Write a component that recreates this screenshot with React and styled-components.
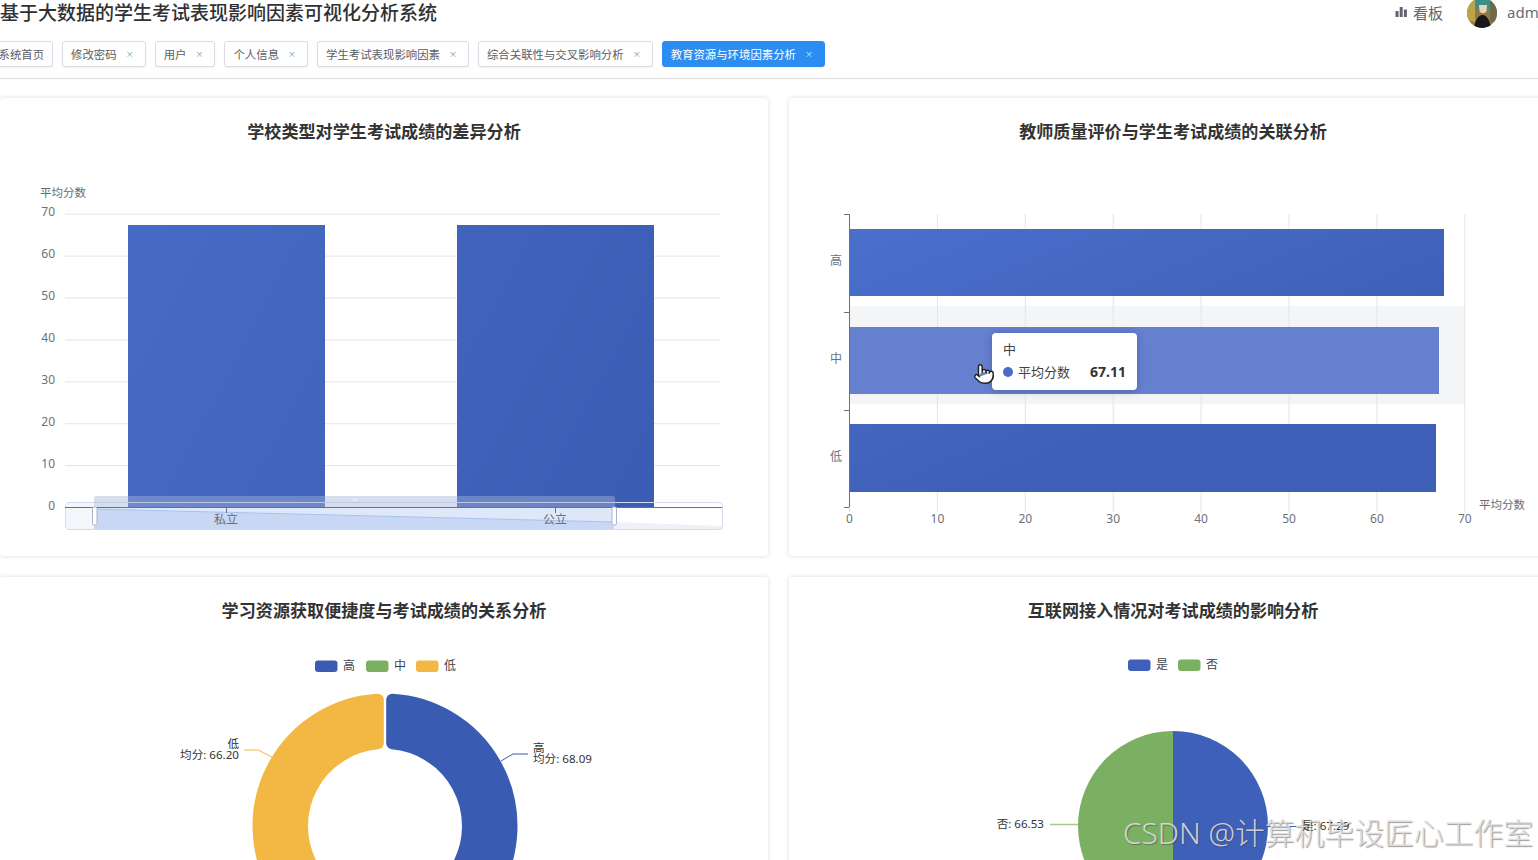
import React from 'react';
import styled, { createGlobalStyle } from 'styled-components';
import { Pointer } from 'lucide-react';

const GlobalStyle = createGlobalStyle`
  html, body {
    margin: 0;
    padding: 0;
    background: #fff;
  }
  body {
    font-family: "Noto Sans", "Noto Sans CJK SC", sans-serif;
  }
`;

const Page = styled.div`
  width: 1538px;
  height: 860px;
  overflow: hidden;
  position: relative;
  background: #fff;
`;

const Header = styled.header`
  height: 26px;
  padding-bottom: 4px;
  display: flex;
  align-items: center;
  white-space: nowrap;
`;

const Title = styled.h1`
  margin: 0 0 3px;
  flex: 1;
  font-size: 19px;
  line-height: 24px;
  font-weight: 500;
  color: #303133;
  font-family: "Noto Sans CJK SC", sans-serif;
`;

const BoardLink = styled.div`
  display: flex;
  align-items: center;
  gap: 6px;
  margin-bottom: 2px;
  font-size: 15px;
  color: #5f6470;
  font-family: "Noto Sans CJK SC", sans-serif;
  margin-right: 24px;
`;

const UserName = styled.div`
  width: 31px;
  margin-left: 10px;
  margin-bottom: 2px;
  overflow: hidden;
  font-size: 15px;
  color: #666c78;
`;

const TabsBar = styled.nav`
  display: flex;
  gap: 9px;
  height: 26px;
  padding: 11px 0;
  margin-left: -10.5px;
  width: 1548.5px;
  border-bottom: 1px solid #dcdcdc;
`;

const Tab = styled.div`
  display: flex;
  align-items: center;
  box-sizing: border-box;
  height: 26px;
  padding: 0 ${p => (p.$closable ? '11px' : '8px')} 0 8px;
  border: 1px solid ${p => (p.$active ? '#2d8cf0' : '#d8dce5')};
  border-radius: 3px;
  background: ${p => (p.$active ? '#2d8cf0' : '#fff')};
  color: ${p => (p.$active ? '#fff' : '#5a5e66')};
  font-size: 11.4px;
  font-family: "Noto Sans CJK SC", sans-serif;
  white-space: nowrap;
  box-shadow: 0 1px 2px rgba(0, 0, 0, 0.06);
`;

const TabClose = styled.span`
  margin-left: 9px;
  width: 8px;
  text-align: center;
  font-size: 8px;
  line-height: 10px;
  color: ${p => (p.$active ? '#dcecff' : '#8d9199')};
`;

const Dashboard = styled.main`
  display: grid;
  grid-template-columns: 768px 768px;
  grid-auto-rows: 458px;
  gap: 21px;
  padding-top: 19px;
`;

const Card = styled.section`
  background: #fff;
  border-radius: 3px;
  box-shadow: 0 0 5px rgba(0, 0, 0, 0.14);
  position: relative;
`;

const CardTitle = styled.h2`
  margin: 0;
  height: 66px;
  line-height: 66px;
  text-align: center;
  font-size: 17.1px;
  font-weight: 700;
  color: #333;
  font-family: "Noto Sans CJK SC", sans-serif;
  transform: translateY(-0.5px);
`;

const ChartSvg = styled.svg`
  display: block;
  width: 768px;
  height: 392px;
  font-family: "Noto Sans", "Noto Sans CJK SC", sans-serif;
`;

const AxisText = styled.text`
  font-size: 12px;
  fill: #6e7079;
`;

const AxisName = styled.text`
  font-size: 11.5px;
  fill: #666c74;
`;

const SliceText = styled.text`
  font-size: 11.6px;
  fill: #333;
`;

const LegendText = styled.text`
  font-size: 12px;
  fill: #444;
`;

const Tooltip = styled.div`
  position: absolute;
  left: 203px;
  top: 235px;
  box-sizing: border-box;
  width: 145px;
  height: 57px;
  padding: 6px 11px;
  background: #fff;
  border-radius: 4px;
  box-shadow: 0 1px 8px rgba(0, 0, 0, 0.22);
  color: #444;
  font-size: 13px;
  font-family: "Noto Sans CJK SC", sans-serif;
`;

const TooltipRow = styled.div`
  display: flex;
  align-items: center;
  margin-top: 4px;
`;

const TooltipDot = styled.span`
  width: 10px;
  height: 10px;
  margin-right: 5px;
  border-radius: 50%;
  background: #4a6cc6;
`;

const TooltipValue = styled.span`
  margin-left: auto;
  font-weight: 700;
  font-size: 14px;
  color: #333;
  font-family: "Noto Sans", sans-serif;
`;

const HandCursor = styled(Pointer)`
  position: absolute;
  left: 184px;
  top: 265px;
  fill: #fff;
  color: #222;
`;

const Watermark = styled.div`
  position: absolute;
  left: 1123px;
  top: 812px;
  font-size: 29.8px;
  line-height: 42px;
  white-space: nowrap;
  color: rgba(222, 222, 222, 0.9);
  text-shadow: 1px 1px 1px rgba(70, 70, 70, 0.55);
  font-family: "Noto Sans", "Noto Sans CJK SC", sans-serif;
  font-weight: 300;
`;

const tabs = [
  { name: '系统首页' },
  { name: '修改密码', closable: true },
  { name: '用户', closable: true },
  { name: '个人信息', closable: true },
  { name: '学生考试表现影响因素', closable: true },
  { name: '综合关联性与交叉影响分析', closable: true },
  { name: '教育资源与环境因素分析', closable: true, active: true }
];

const BLUE = '#3a5bb2';
const GREEN = '#7bb063';
const YELLOW = '#f2b843';
const GRID = '#e3e5ea';

const polar = (cx, cy, radius, deg) => {
  const rad = (deg * Math.PI) / 180;
  return [cx + radius * Math.sin(rad), cy - radius * Math.cos(rad)];
};

// rounded donut slice: path is inset and stroked with round joins
const ringSlice = (cx, cy, outer, inner, from, to, inset, gap) => {
  const ro = outer - inset;
  const ri = inner + inset;
  const offO = (((gap + inset) / ro) * 180) / Math.PI;
  const offI = (((gap + inset) / ri) * 180) / Math.PI;
  const large = to - from > 180 ? 1 : 0;
  const a = polar(cx, cy, ro, from + offO);
  const b = polar(cx, cy, ro, to - offO);
  const c = polar(cx, cy, ri, to - offI);
  const d = polar(cx, cy, ri, from + offI);
  return `M${a} A${ro} ${ro} 0 ${large} 1 ${b} L${c} A${ri} ${ri} 0 ${large} 0 ${d} Z`;
};

const BarsChart = () => {
  const values = [0, 10, 20, 30, 40, 50, 60, 70];
  return (
    <ChartSvg viewBox="0 164 768 392">
      <defs>
        <linearGradient id="schoolBar" gradientUnits="userSpaceOnUse" x1="128" y1="225" x2="654" y2="507">
          <stop offset="0" stopColor="#476bc5" />
          <stop offset="1" stopColor="#3b5cb3" />
        </linearGradient>
      </defs>
      <AxisName x="40" y="197">平均分数</AxisName>
      {values.map((v, i) => {
        const y = 507.5 - i * 41.9;
        return (
          <g key={v}>
            {i > 0 && <line x1="65" x2="720" y1={y} y2={y} stroke={GRID} />}
            <AxisText x="55" y={y + 2} textAnchor="end">{v}</AxisText>
          </g>
        );
      })}
      <rect x="128" y="225" width="197" height="282" fill="url(#schoolBar)" />
      <rect x="457" y="225" width="197" height="282" fill="url(#schoolBar)" />

      {/* data zoom */}
      <rect x="66" y="503" width="28" height="26" fill="#dfe4f3" fillOpacity="0.35" />
      <polygon points="94,508 614,522 722,526 722,529 614,529 94,529" fill="#eef1f9" />
      <polygon points="94,508 614,508 614,529 94,529" fill="#dfe8f8" />
      <polygon points="94,509 614,522 614,530 94,530" fill="#c8d7f4" />
      <polyline points="94,509 614,522" fill="none" stroke="#a9c2f0" />
      <rect x="65.5" y="502.5" width="657" height="27" rx="3" fill="none" stroke="#d2dbee" />
      <line x1="65" x2="722" y1="507.5" y2="507.5" stroke="#6e7079" />
      <line x1="226.5" x2="226.5" y1="508" y2="513" stroke="#6e7079" />
      <line x1="555.5" x2="555.5" y1="508" y2="513" stroke="#6e7079" />
      <AxisText x="226" y="524" textAnchor="middle">私立</AxisText>
      <AxisText x="555" y="524" textAnchor="middle">公立</AxisText>
      <rect x="94" y="496" width="521" height="11" rx="2" fill="#a5b4d6" fillOpacity="0.45" />
      <path d="M353 498v3M355 498v3M357 498v3" stroke="#eef1f8" />
      <rect x="92.5" y="507" width="4.5" height="18" rx="1.5" fill="#fff" stroke="#aab4c8" />
      <rect x="612" y="507" width="4.5" height="18" rx="1.5" fill="#fff" stroke="#aab4c8" />
    </ChartSvg>
  );
};

const QualityChart = () => {
  const values = [0, 10, 20, 30, 40, 50, 60, 70];
  const cats = [
    { name: '高', y: 265 },
    { name: '中', y: 363 },
    { name: '低', y: 461 }
  ];
  return (
    <ChartSvg viewBox="789 164 768 392">
      <defs>
        <linearGradient id="qualityBar" gradientUnits="userSpaceOnUse" x1="849" y1="229" x2="960" y2="492">
          <stop offset="0" stopColor="#4a70cc" />
          <stop offset="1" stopColor="#3f60b8" />
        </linearGradient>
      </defs>
      <rect x="849" y="306" width="616" height="98" fill="#96a0b4" fillOpacity="0.1" />
      {values.map((v, i) => {
        const x = 849.5 + i * 87.9;
        return (
          <g key={v}>
            {i > 0 && <line x1={x} x2={x} y1="214" y2="507" stroke={GRID} />}
            <line x1={x} x2={x} y1="507" y2="512" stroke={GRID} />
            <AxisText x={x} y="523" textAnchor="middle">{v}</AxisText>
          </g>
        );
      })}
      <rect x="849" y="229" width="595" height="67" fill="url(#qualityBar)" />
      <rect x="849" y="327" width="590" height="67" fill="#6680d0" />
      <rect x="849" y="424" width="587" height="68" fill="url(#qualityBar)" />
      <line x1="849.5" x2="849.5" y1="214" y2="507" stroke="#6e7079" />
      {[214, 312, 410, 507].map(y => (
        <line key={y} x1="844" x2="849" y1={y + 0.5} y2={y + 0.5} stroke="#6e7079" />
      ))}
      {cats.map(c => (
        <AxisText key={c.name} x="836" y={c.y} textAnchor="middle">{c.name}</AxisText>
      ))}
      <AxisName x="1479" y="509">平均分数</AxisName>
    </ChartSvg>
  );
};

const Legend = ({ items }) => (
  <g>
    {items.map(item => (
      <g key={item.name}>
        <rect x={item.x} y={item.y - 5.5} width="22.5" height="11.5" rx="3" fill={item.color} />
        <LegendText x={item.x + 28} y={item.y + 4}>{item.name}</LegendText>
      </g>
    ))}
  </g>
);

const AccessChart = () => (
  <ChartSvg viewBox="0 643 768 392">
    <Legend
      items={[
        { name: '高', x: 315, y: 666, color: BLUE },
        { name: '中', x: 366, y: 666, color: GREEN },
        { name: '低', x: 416, y: 666, color: YELLOW }
      ]}
    />
    <path d={ringSlice(385, 826, 132.5, 77, 0, 122, 6, 1.2)} fill={BLUE} stroke={BLUE} strokeWidth="12" strokeLinejoin="round" />
    <path d={ringSlice(385, 826, 132.5, 77, 122, 238, 6, 1.2)} fill={GREEN} stroke={GREEN} strokeWidth="12" strokeLinejoin="round" />
    <path d={ringSlice(385, 826, 132.5, 77, 238, 360, 6, 1.2)} fill={YELLOW} stroke={YELLOW} strokeWidth="12" strokeLinejoin="round" />
    <polyline points="501,761 513,754 528,754" fill="none" stroke={BLUE} />
    <polyline points="272,757 258,750 244,750" fill="none" stroke={YELLOW} />
    <SliceText x="533" y="752">高</SliceText>
    <SliceText x="533" y="763">均分: 68.09</SliceText>
    <SliceText x="239" y="748" textAnchor="end">低</SliceText>
    <SliceText x="239" y="759" textAnchor="end">均分: 66.20</SliceText>
  </ChartSvg>
);

const InternetChart = () => (
  <ChartSvg viewBox="789 643 768 392">
    <Legend
      items={[
        { name: '是', x: 1128, y: 665, color: '#3e60b8' },
        { name: '否', x: 1178, y: 665, color: GREEN }
      ]}
    />
    <path d="M1173 731 A95 95 0 0 1 1173 921 Z" fill="#3e60b8" />
    <path d="M1173 731 A95 95 0 0 0 1173 921 Z" fill={GREEN} />
    <line x1="1050" x2="1078" y1="824.5" y2="824.5" stroke="#a3cd90" strokeWidth="1.5" />
    <line x1="1268" x2="1297" y1="826.5" y2="826.5" stroke="#3e60b8" />
    <SliceText x="1044" y="828" textAnchor="end">否: 66.53</SliceText>
    <SliceText x="1302" y="830">是: 67.29</SliceText>
  </ChartSvg>
);

const BarIcon = () => (
  <svg width="12" height="12" viewBox="0 0 12 12">
    <rect x="0.5" y="5" width="3" height="6" fill="#5f6470" />
    <rect x="4.7" y="1" width="3" height="10" fill="#5f6470" />
    <rect x="8.9" y="3.5" width="3" height="7.5" fill="#5f6470" />
  </svg>
);

const Avatar = () => (
  <svg width="30" height="30" viewBox="0 0 30 30">
    <defs>
      <clipPath id="avatarClip">
        <circle cx="15" cy="15" r="15" />
      </clipPath>
    </defs>
    <g clipPath="url(#avatarClip)">
      <rect width="30" height="30" fill="#8f7c45" />
      <path d="M0 4 L8 2 L8 24 L0 22Z" fill="#bfa24c" />
      <path d="M23 0 L30 4 L30 24 L23 24Z" fill="#6f6a4e" />
      <path d="M9 2 C12 -2 21 -2 23 3 C24 7 22 10 21 13 L20 7 L12 7 L11 14 C9 11 8 6 9 2Z" fill="#3a9088" />
      <path d="M12 7 L20 7 L19.5 13 C18 16 14 16 12.5 13Z" fill="#e8d2c2" />
      <path d="M7 30 C8 23 11 17 15.5 17 C20 17 23 23 24 30Z" fill="#17181c" />
    </g>
  </svg>
);

const App = () => (
  <Page>
    <GlobalStyle />
    <Header>
      <Title>基于大数据的学生考试表现影响因素可视化分析系统</Title>
      <BoardLink>
        <BarIcon />
        看板
      </BoardLink>
      <Avatar />
      <UserName>admin</UserName>
    </Header>
    <TabsBar>
      {tabs.map(tab => (
        <Tab key={tab.name} $active={tab.active} $closable={tab.closable}>
          {tab.name}
          {tab.closable && <TabClose $active={tab.active}>×</TabClose>}
        </Tab>
      ))}
    </TabsBar>
    <Dashboard>
      <Card>
        <CardTitle>学校类型对学生考试成绩的差异分析</CardTitle>
        <BarsChart />
      </Card>
      <Card>
        <CardTitle>教师质量评价与学生考试成绩的关联分析</CardTitle>
        <QualityChart />
        <Tooltip>
          中
          <TooltipRow>
            <TooltipDot />
            平均分数
            <TooltipValue>67.11</TooltipValue>
          </TooltipRow>
        </Tooltip>
        <HandCursor size={22} strokeWidth={1.6} />
      </Card>
      <Card>
        <CardTitle>学习资源获取便捷度与考试成绩的关系分析</CardTitle>
        <AccessChart />
      </Card>
      <Card>
        <CardTitle>互联网接入情况对考试成绩的影响分析</CardTitle>
        <InternetChart />
      </Card>
    </Dashboard>
    <Watermark>CSDN @计算机毕设匠心工作室</Watermark>
  </Page>
);

export default App;
